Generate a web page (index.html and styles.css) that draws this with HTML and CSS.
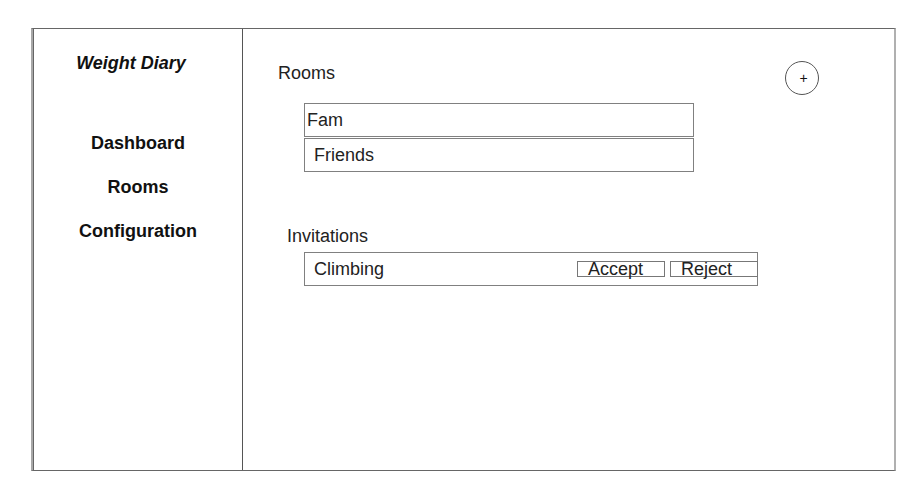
FILE: index.html
```html
<!DOCTYPE html>
<html>
  <head>
    <title>Weight Diary</title>
    <link rel="stylesheet" href="styles.css">
  </head>
  <body>
    <div class="app">
      <aside class="sidebar">
        <h1 class="app-title">Weight Diary</h1>
        <nav class="nav">
          <a class="nav-item">Dashboard</a>
          <a class="nav-item">Rooms</a>
          <a class="nav-item">Configuration</a>
        </nav>
      </aside>

      <main class="content">
        <div class="section-header">
          <h2 class="section-title">Rooms</h2>
          <button class="add-button">+</button>
        </div>
        <ul class="room-list">
          <li class="room-item room-item-tight">Fam</li>
          <li class="room-item">Friends</li>
        </ul>

        <h2 class="section-title invitations-title">Invitations</h2>
        <div class="invite-item">
          <span class="invite-name">Climbing</span>
          <div class="invite-actions">
            <button class="invite-button">Accept</button>
            <button class="invite-button">Reject</button>
          </div>
        </div>
      </main>
    </div>
  </body>
</html>
```

FILE: styles.css
```css
* {
  margin: 0;
  padding: 0;
  box-sizing: border-box;
  font-family: "Liberation Sans", Arial, sans-serif;
}

body {
  background: #ffffff;
  color: #111111;
}

.app {
  display: flex;
  width: 865px;
  height: 443px;
  margin: 28px 0 0 31px;
  border: 1px solid #666666;
  border-left: 2px solid #a8a8a8;
  border-right: 2px solid #b0b0b0;
}

.sidebar {
  width: 210px;
  border-left: 1px solid #666666;
  border-right: 1px solid #555555;
  padding-top: 24px;
  text-align: center;
}

.app-title {
  font-size: 18px;
  line-height: 20px;
  font-weight: 700;
  font-style: italic;
  padding-right: 14px;
}

.nav {
  display: flex;
  flex-direction: column;
  gap: 24px;
  margin-top: 60px;
}

.nav-item {
  font-size: 18px;
  line-height: 20px;
  font-weight: 700;
  color: #111111;
}

.content {
  flex: 1;
  padding: 32px 0 0 35px;
}

.section-header {
  display: flex;
  justify-content: space-between;
  align-items: flex-start;
  padding-right: 75px;
}

.section-title {
  font-size: 18px;
  line-height: 20px;
  font-weight: 400;
  color: #222222;
  margin-top: 2px;
}

.add-button {
  width: 34px;
  height: 34px;
  border: 1px solid #555555;
  border-radius: 50%;
  background: #ffffff;
  font-size: 14px;
  line-height: 14px;
  color: #111111;
  padding: 0 0 0 3px;
}

.room-list {
  list-style: none;
  width: 390px;
  margin: 8px 0 0 26px;
  display: flex;
  flex-direction: column;
  gap: 1px;
}

.room-item {
  height: 34px;
  border: 1px solid #808080;
  font-size: 18px;
  line-height: 33px;
  padding-left: 9px;
  color: #222222;
}

.room-item-tight {
  padding-left: 2px;
}

.invitations-title {
  margin: 54px 0 0 9px;
}

.invite-item {
  display: flex;
  align-items: center;
  width: 454px;
  height: 34px;
  margin: 6px 0 0 26px;
  border: 1px solid #808080;
  padding-left: 9px;
}

.invite-name {
  font-size: 18px;
  color: #222222;
}

.invite-actions {
  display: flex;
  gap: 5px;
  margin-left: auto;
  margin-right: -1px;
}

.invite-button {
  width: 88px;
  height: 16px;
  border: 1px solid #777777;
  background: #ffffff;
  font-size: 18px;
  line-height: 14px;
  text-align: left;
  padding-left: 10px;
  color: #222222;
  overflow: visible;
}
```
